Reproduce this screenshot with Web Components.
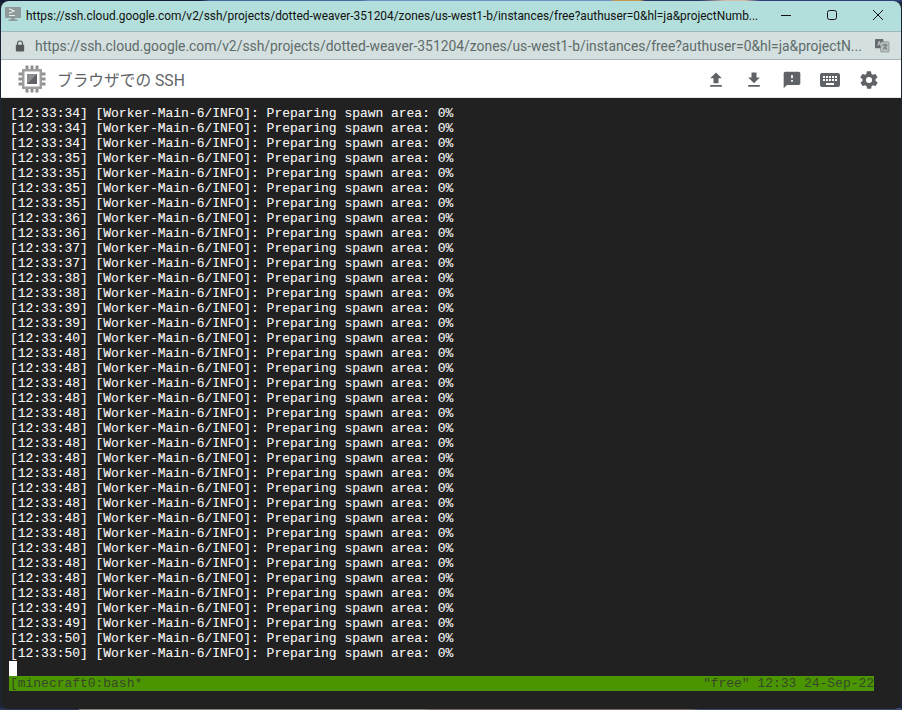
<!DOCTYPE html>
<html lang="ja">
<head>
<meta charset="utf-8">
<title>SSH</title>
<style>
    html, body { margin: 0; height: 100%; overflow: hidden; }
    body {
        font-family: "Liberation Sans", "Noto Sans CJK JP", sans-serif;
        /* the desktop wallpaper only shows as a thin strip round the window */
        background:
            linear-gradient(90deg, #141c38 0 200px, #4a6a9c 210px 360px, #6f93c4 370px 610px, #c49a4e 615px 640px, #2a3a6a 645px 700px, #d6b9a8 725px 745px, #2c3f78 760px) top / 100% 2px no-repeat,
            linear-gradient(90deg, #2a3556 0 78px, #8d8479 80px 420px, #77685f 430px 690px, #3a4a70 700px) bottom / 100% 2px no-repeat,
            #1c2438;
    }
</style>
</head>
<body>
<ssh-window>
    <title-bar slot="title" text="https://ssh.cloud.google.com/v2/ssh/projects/dotted-weaver-351204/zones/us-west1-b/instances/free?authuser=0&amp;hl=ja&amp;projectNumb..."></title-bar>
    <address-bar slot="address" text="https://ssh.cloud.google.com/v2/ssh/projects/dotted-weaver-351204/zones/us-west1-b/instances/free?authuser=0&amp;hl=ja&amp;projectN..."></address-bar>
    <ssh-toolbar slot="toolbar"></ssh-toolbar>
    <terminal-view slot="terminal"></terminal-view>
</ssh-window>

<script>
class SshWindow extends HTMLElement {
    constructor() {
        super();
        this.attachShadow({ mode: 'open' });
    }

    connectedCallback() {
        this.shadowRoot.innerHTML = `
            <style>
                :host {
                    display: flex;
                    flex-direction: column;
                    box-sizing: border-box;
                    width: 900px;
                    height: 708px;
                    margin: 1px 0 0 1px;
                    border-radius: 8px;
                    overflow: hidden;
                    background: #212121;
                }
            </style>
            <slot name="title"></slot>
            <slot name="address"></slot>
            <slot name="toolbar"></slot>
            <slot name="terminal"></slot>
        `;
    }
}

class TitleBar extends HTMLElement {
    constructor() {
        super();
        this.attachShadow({ mode: 'open' });
    }

    connectedCallback() {
        this.shadowRoot.innerHTML = `
            <style>
                :host {
                    display: flex;
                    align-items: center;
                    box-sizing: border-box;
                    height: 31px;
                    padding-left: 4px;
                    background: #b2dfdb;
                    border-bottom: 1px solid #9db8b6;
                    color: #111;
                    font: 11.9px "Roboto", "Liberation Sans", sans-serif;
                }
                .favicon { width: 16px; height: 16px; flex: none; margin: -2px 5px 0 0; }
                .text { flex: 1; white-space: nowrap; }
                .controls { display: flex; flex: none; width: 138px; height: 100%; align-items: center; }
                .controls svg { width: 46px; height: 30px; flex: none; }
            </style>
            <svg class="favicon" viewBox="0 0 16 16">
                <rect x="0" y="0" width="16" height="11" rx="1" fill="#8f9a9a"/>
                <rect x="6" y="11" width="4" height="2" fill="#8f9a9a"/>
                <rect x="3.500" y="12.500" width="9" height="1.500" fill="#8f9a9a"/>
                <path d="M4 1.800l5 2.200-5 2.200M4 8.500h6" fill="none" stroke="#e8eeee" stroke-width="1.200"/>
            </svg>
            <span class="text">${this.getAttribute('text').replace(/&/g, '&amp;')}</span>
            <div class="controls">
                <svg viewBox="0 0 46 30"><path d="M18 14.500h10" stroke="#111" fill="none"/></svg>
                <svg viewBox="0 0 46 30"><rect x="18.500" y="9.500" width="9" height="9" rx="2" stroke="#111" fill="none"/></svg>
                <svg viewBox="0 0 46 30"><path d="M18 9l10 10m0-10l-10 10" stroke="#111" fill="none"/></svg>
            </div>
        `;
    }
}

class AddressBar extends HTMLElement {
    constructor() {
        super();
        this.attachShadow({ mode: 'open' });
    }

    connectedCallback() {
        this.shadowRoot.innerHTML = `
            <style>
                :host {
                    display: flex;
                    align-items: center;
                    box-sizing: border-box;
                    height: 28px;
                    padding-left: 14px;
                    background: #d3e0df;
                    border-bottom: 1px solid #a9b7b6;
                    color: #5f6b6a;
                    font: 13.88px "Roboto", "Liberation Sans", sans-serif;
                }
                .lock { width: 10px; height: 12px; flex: none; margin-right: 10px; }
                .text { flex: 1; white-space: nowrap; }
                .translate { width: 15px; height: 15px; flex: none; margin: 0 11px 0 6px; }
            </style>
            <svg class="lock" viewBox="0 0 12 14">
                <path d="M3 6V4a3 3 0 0 1 6 0v2" fill="none" stroke="#55595c" stroke-width="1.400"/>
                <rect x="1" y="5.500" width="10" height="8" rx="1" fill="#55595c"/>
            </svg>
            <span class="text">${this.getAttribute('text').replace(/&/g, '&amp;')}</span>
            <svg class="translate" viewBox="0 0 16 16">
                <rect x="0" y="1" width="9" height="10" rx="1" fill="#666b6e"/>
                <rect x="6" y="4" width="9" height="11" rx="1" fill="#b4bcbc" stroke="#777d80" stroke-width=".6"/>
                <path d="M3 8l1.500-4.500L6 8M3.500 6.500h2" stroke="#dde" stroke-width=".8" fill="none"/>
                <path d="M8 7.500h5M10.500 6.500v1M12.500 7.500c-.5 2-2 3.500-4 4.500M9.500 9c.8 1.500 2 2.500 3.500 3" stroke="#555" stroke-width=".8" fill="none"/>
            </svg>
        `;
    }
}

class SshToolbar extends HTMLElement {
    constructor() {
        super();
        this.attachShadow({ mode: 'open' });
    }

    connectedCallback() {
        this.shadowRoot.innerHTML = `
            <style>
                :host {
                    display: flex;
                    align-items: center;
                    box-sizing: border-box;
                    height: 38px;
                    padding-left: 16px;
                    background: #fff;
                    border-bottom: 1px solid #e4e4e4;
                    color: #5f6368;
                    font: 15.7px "Roboto", "Noto Sans CJK JP", sans-serif;
                }
                .chip { width: 30px; height: 30px; flex: none; margin-right: 10px; }
                .name { flex: 1; white-space: nowrap; margin-top: 2px; }
                .actions { display: flex; align-items: center; gap: 14px; margin: 2px 20px 0 0; }
                .actions svg { width: 24px; height: 24px; flex: none; fill: #5f6368; }
                .actions .gear { margin-left: 1px; }
            </style>
            <svg class="chip" viewBox="0 0 30 30">
                <rect x="5" y="5" width="20" height="20" fill="#9e9e9e"/>
                <rect x="7.500" y="7.500" width="15" height="15" fill="#fff"/>
                <rect x="10" y="10" width="10" height="10" fill="#5f6368"/>
                <path d="M10 20V10h10z" fill="#8a8d90"/>
                <path d="M8.500 1.500h3v3.500h-3zM13.500 1.500h3v3.500h-3zM18.500 1.500h3v3.500h-3zM8.500 25h3v3.500h-3zM13.500 25h3v3.500h-3zM18.500 25h3v3.500h-3zM1.500 8.500H5v3H1.500zM1.500 13.500H5v3H1.500zM1.500 18.500H5v3H1.500zM25 8.500h3.500v3H25zM25 13.500h3.500v3H25zM25 18.500h3.500v3H25z" fill="#8f8f8f"/>
            </svg>
            <span class="name">ブラウザでの SSH</span>
            <div class="actions">
                <svg viewBox="-2.400 -2.400 28.800 28.800"><path d="M9 16h6v-6h4l-7-7-7 7h4zM5 18h14v2H5z"/></svg>
                <svg viewBox="-2.400 -2.400 28.800 28.800"><path d="M19 9h-4V3H9v6H5l7 7zM5 18v2h14v-2z"/></svg>
                <svg viewBox="-2.400 -2.400 28.800 28.800"><path d="M20 2H4a2 2 0 0 0-2 2v18l4-4h14a2 2 0 0 0 2-2V4a2 2 0 0 0-2-2zm-7 12h-2v-2h2zm0-4h-2V6h2z"/></svg>
                <svg viewBox="0 0 24 24"><path d="M20 5H4a2 2 0 0 0-2 2v10a2 2 0 0 0 2 2h16a2 2 0 0 0 2-2V7a2 2 0 0 0-2-2zm-9 3h2v2h-2zm0 3h2v2h-2zM8 8h2v2H8zm0 3h2v2H8zm-1 2H5v-2h2zm0-3H5V8h2zm9 7H8v-2h8zm0-4h-2v-2h2zm0-3h-2V8h2zm3 3h-2v-2h2zm0-3h-2V8h2z"/></svg>
                <svg class="gear" viewBox="-1.700 -1.700 27.400 27.400"><path d="M19.400 13a7.500 7.500 0 0 0 0-2l2.100-1.600a.5.5 0 0 0 .1-.6l-2-3.500a.5.5 0 0 0-.6-.2l-2.500 1a7.300 7.300 0 0 0-1.700-1l-.4-2.600a.5.5 0 0 0-.5-.4h-4a.5.5 0 0 0-.5.4l-.4 2.600a7.700 7.700 0 0 0-1.700 1l-2.500-1a.5.5 0 0 0-.6.2l-2 3.500a.5.5 0 0 0 .1.600L4.600 11a7.900 7.900 0 0 0 0 2l-2.100 1.600a.5.5 0 0 0-.1.600l2 3.500a.5.5 0 0 0 .6.2l2.500-1a7.300 7.300 0 0 0 1.700 1l.4 2.600a.5.5 0 0 0 .5.4h4a.5.5 0 0 0 .5-.4l.4-2.600a7.700 7.700 0 0 0 1.700-1l2.500 1a.5.5 0 0 0 .6-.2l2-3.500a.5.5 0 0 0-.1-.6zM12 15.500a3.500 3.500 0 1 1 0-7 3.500 3.500 0 0 1 0 7z"/></svg>
            </div>
        `;
    }
}

class TerminalView extends HTMLElement {
    constructor() {
        super();
        this.attachShadow({ mode: 'open' });
    }

    connectedCallback() {
        // seconds and how many log rows carry them, top to bottom
        const runs = [[34, 3], [35, 4], [36, 2], [37, 2], [38, 2], [39, 2], [40, 1], [48, 17], [49, 2], [50, 2]];
        let rows = '';
        for (const [sec, count] of runs) {
            for (let i = 0; i < count; i++) {
                rows += `<div class="row">[12:33:${sec}] [Worker-Main-6/INFO]: Preparing spawn area: 0%</div>`;
            }
        }
        this.shadowRoot.innerHTML = `
            <style>
                :host {
                    display: block;
                    flex: 1;
                    box-sizing: border-box;
                    padding: 8px 0 0 8px;
                    background: #212121;
                    color: #f4f4f4;
                    font: 13px/15px "Liberation Mono", monospace;
                    letter-spacing: -.025px;
                }
                .row {
                    height: 15px;
                    padding-left: 1px;
                    white-space: pre;
                    text-shadow: .2px 0 rgba(255, 170, 110, .25), -.2px 0 rgba(110, 200, 255, .25);
                }
                .cursor { width: 8px; height: 15px; background: #fff; }
                .status {
                    display: flex;
                    justify-content: space-between;
                    box-sizing: border-box;
                    width: 865px;
                    height: 15px;
                    padding-left: 1px;
                    background: #4b9600;
                    color: #37472a;
                    white-space: pre;
                }
            </style>
            ${rows}
            <div class="cursor"></div>
            <div class="status"><span>[minecraft0:bash*</span><span>"free" 12:33 24-Sep-22</span></div>
        `;
    }
}

customElements.define('ssh-window', SshWindow);
customElements.define('title-bar', TitleBar);
customElements.define('address-bar', AddressBar);
customElements.define('ssh-toolbar', SshToolbar);
customElements.define('terminal-view', TerminalView);
</script>
</body>
</html>
